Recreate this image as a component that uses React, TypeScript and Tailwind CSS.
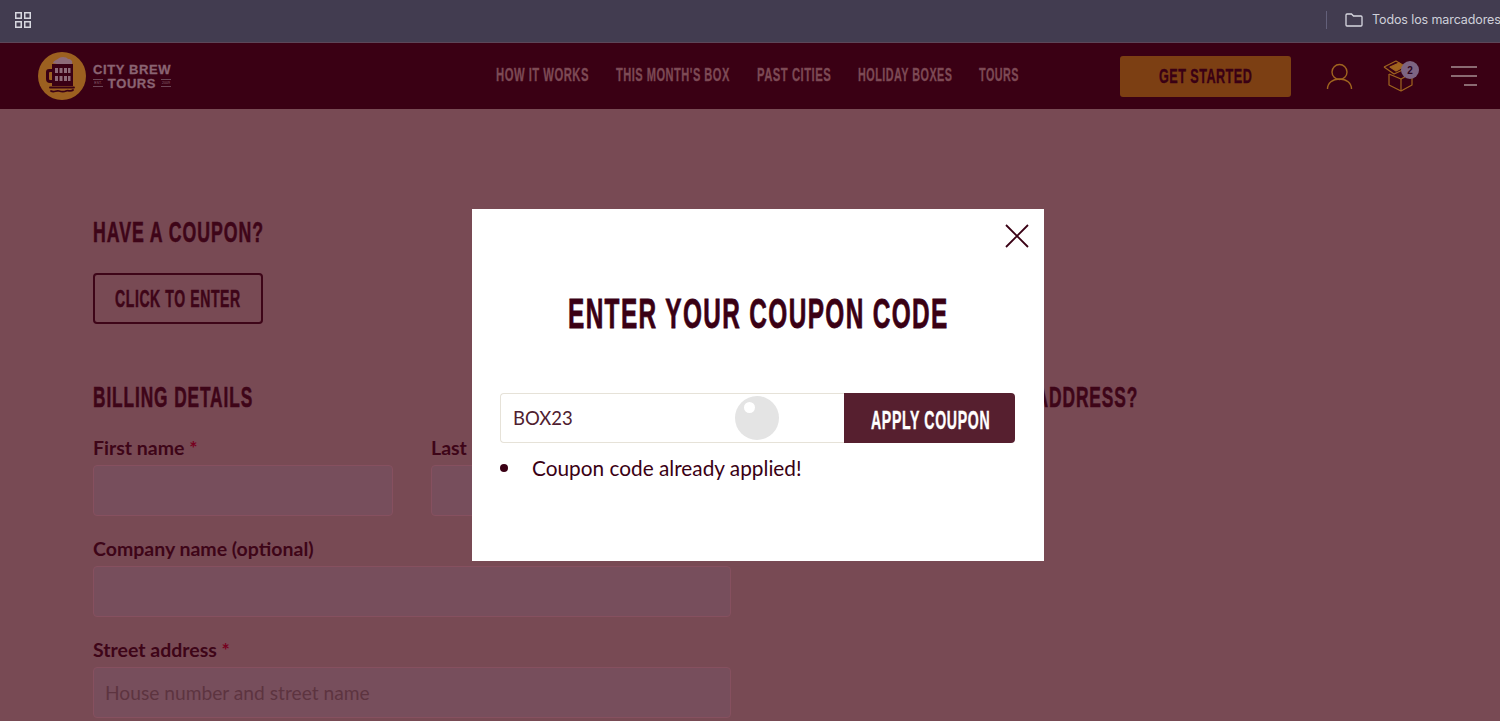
import React from "react";

const head = "font-['Liberation_Sans',sans-serif] font-bold";
const body = "font-['Lato','Noto_Sans',sans-serif]";

function Cond({ w, s, children }: { w: string; s: string; children: React.ReactNode }) {
  return (
    <span className={`block shrink-0 ${w}`}>
      <span className={`block w-max origin-left whitespace-nowrap ${s}`}>{children}</span>
    </span>
  );
}

function Logo() {
  return (
    <svg width="48" height="48" viewBox="0 0 48 48" className="shrink-0">
      <circle cx="24" cy="24" r="24" fill="#9c6020" />
      <path d="M15 11c1-3 4-3 6-5 3-2 8-1 9 1 3 0 5 2 4 5l-1 3-2-1c-5-2-11-1-16-3z" fill="#8d6a78" />
      <path d="M14 12h21v22H14zM14 17H11a3 3 0 0 0-3 3v7a4 4 0 0 0 4 4h2v-3h-2a1 1 0 0 1-1-1v-6a1 1 0 0 1 1-1h2z" fill="#3a0014" />
      <g fill="#8d6a78">
        <rect x="17" y="16" width="3" height="5" /><rect x="21.5" y="16" width="3" height="5" /><rect x="26" y="16" width="3" height="5" /><rect x="30" y="16" width="2.5" height="5" />
        <rect x="17" y="24" width="3" height="5" /><rect x="21.5" y="24" width="3" height="5" /><rect x="26" y="24" width="3" height="5" /><rect x="30" y="24" width="2.5" height="5" />
      </g>
      <path d="M12 35.5h24M13 39c3 2 5-1 8 0s5 1 7 0 5 1 7-1" stroke="#3a0014" strokeWidth="1.8" fill="none" strokeLinecap="round" />
    </svg>
  );
}

function BoxIcon() {
  return (
    <svg width="30" height="32" viewBox="0 0 30 32" fill="none" stroke="#a0641f" strokeWidth="1.2" strokeLinejoin="round">
      <path d="M6 14v11l12 6 11-6V14" />
      <path d="M18 19v12" />
      <path d="M6 14l12 5 11-6" />
      <path d="M1 7l12-6 5 3" />
      <path d="M1 7l10 7 13-6" />
      <path d="M7 7l9-4 6 3-9 5z" fill="#a0641f" />
    </svg>
  );
}

function Field({ label, required, placeholder, className }: { label: string; required?: boolean; placeholder?: string; className: string }) {
  return (
    <div className={`flex flex-col ${className}`}>
      <div className={`${body} text-[19.5px] font-bold leading-[22px] text-[#3e0518] whitespace-nowrap`}>
        {label}
        {required && <span className="text-[#77011f]"> *</span>}
      </div>
      <div className={`${body} mt-[6px] flex h-[51px] items-center rounded-[4px] border border-[#86505f] bg-[#774e5c] px-[11px] pt-[1px] text-[19.2px] text-[#5d3440]`}>
        {placeholder}
      </div>
    </div>
  );
}

export default function App() {
  return (
    <div className="relative flex h-[721px] w-[1500px] flex-col overflow-hidden bg-[#784a54]">
      <div className="flex h-[43px] shrink-0 items-center border-b border-[#5c4658] bg-[#423c50] pb-[2px] pl-[15px]">
        <svg width="16" height="16" viewBox="0 0 16 16" fill="none" stroke="#d8d8e0" strokeWidth="1.5">
          <rect x=".75" y=".75" width="5.5" height="5.5" /><rect x="9.75" y=".75" width="5.5" height="5.5" />
          <rect x=".75" y="9.75" width="5.5" height="5.5" /><rect x="9.75" y="9.75" width="5.5" height="5.5" />
        </svg>
        <div className="ml-auto flex items-center">
          <div className="h-[18px] w-px bg-[#63607a]" />
          <svg className="ml-[18px]" width="18" height="14" viewBox="0 0 18 14" fill="none" stroke="#d8d8e0" strokeWidth="1.3">
            <path d="M1 12V2a1 1 0 0 1 1-1h4.5l2 2H16a1 1 0 0 1 1 1v8a1 1 0 0 1-1 1H2a1 1 0 0 1-1-1z" />
          </svg>
          <span className="ml-[9px] w-[128px] whitespace-nowrap font-['Inter',sans-serif] text-[12.5px] tracking-[-0.1px] text-[#cfd0da]">Todos los marcadores</span>
        </div>
      </div>

      <header className="flex h-[66px] shrink-0 items-center bg-[#3a0014] pl-[38px]">
        <Logo />
        <div className="ml-[7px] flex w-[78px] flex-col font-['Liberation_Sans',sans-serif] font-bold text-[#8a6372] [-webkit-text-stroke:0.3px]">
          <span className="text-[13px] leading-[14px] tracking-[0.6px] whitespace-nowrap">CITY BREW</span>
          <div className="flex items-center justify-between">
            <span className="w-[10px] border-y border-[#6d4656] text-center text-[3.5px] leading-[6px] font-normal [-webkit-text-stroke:0px]">EST.</span>
            <span className="text-[13px] leading-[13px] tracking-[0.6px]">TOURS</span>
            <span className="w-[10px] border-y border-[#6d4656] text-center text-[3.5px] leading-[6px] font-normal [-webkit-text-stroke:0px]">2009</span>
          </div>
        </div>
        <nav className={`${head} ml-[325px] flex gap-[27px] pb-[2px] text-[18px] tracking-[0.8px] text-[#7d4a55] [-webkit-text-stroke:0.3px]`}>
          <Cond w="w-[93px]" s="scale-x-[0.626]">HOW IT WORKS</Cond>
          <Cond w="w-[114px]" s="scale-x-[0.615]">THIS MONTH'S BOX</Cond>
          <Cond w="w-[74px]" s="scale-x-[0.627]">PAST CITIES</Cond>
          <Cond w="w-[94px]" s="scale-x-[0.60]">HOLIDAY BOXES</Cond>
          <Cond w="w-[40px]" s="scale-x-[0.60]">TOURS</Cond>
        </nav>
        <div className="ml-auto flex items-center pr-[23px]">
          <div className={`${head} flex h-[41px] w-[171px] items-center justify-center rounded-[3px] bg-[#7c3f13] text-[21px] tracking-[0.8px] text-[#3a0014] [-webkit-text-stroke:0.4px]`}>
            <Cond w="w-[94px]" s="scale-x-[0.60]">GET STARTED</Cond>
          </div>
          <svg className="ml-[35px]" width="27" height="27" viewBox="0 0 27 27" fill="none" stroke="#a0641f" strokeWidth="1.4">
            <circle cx="13.5" cy="9" r="7.5" />
            <path d="M1.5 26c0-6 5-10 12-10s12 4 12 10" />
          </svg>
          <div className="relative ml-[30px] h-[32px] w-[32px]">
            <BoxIcon />
            <div className="absolute left-[18px] top-[1px] flex h-[18px] w-[18px] items-center justify-center rounded-full bg-[#7d6482] font-['Liberation_Sans',sans-serif] text-[10px] font-bold text-[#2e0520]">2</div>
          </div>
          <div className="ml-[36px] flex w-[26px] flex-col items-end gap-[7px]">
            <div className="h-[2px] w-full bg-[#8a6a72]" />
            <div className="h-[2px] w-full bg-[#8a6a72]" />
            <div className="h-[2px] w-[13px] bg-[#8a6a72]" />
          </div>
        </div>
      </header>

      <main className="flex flex-col pl-[93px] pt-[105px]">
        <h2 className={`${head} text-[30px] leading-[36px] tracking-[1.6px] text-[#3e0518] [-webkit-text-stroke:0.6px]`}>
          <Cond w="w-[169px]" s="scale-x-[0.59]">HAVE A COUPON?</Cond>
        </h2>
        <div className={`${head} mt-[23px] flex h-[51px] w-[170px] items-center justify-center rounded-[4px] border-2 border-[#3e0518] pt-[3px] text-[23.5px] tracking-[1px] text-[#3e0518] [-webkit-text-stroke:0.5px]`}>
          <Cond w="w-[126px]" s="scale-x-[0.597]">CLICK TO ENTER</Cond>
        </div>
        <div className={`${head} mt-[55px] flex text-[30px] leading-[36px] tracking-[1.6px] text-[#3e0518] [-webkit-text-stroke:0.6px]`}>
          <h2 className="w-[733px]"><Cond w="w-[160px]" s="scale-x-[0.575]">BILLING DETAILS</Cond></h2>
          <h2><Cond w="w-[312px]" s="scale-x-[0.578]">SHIP TO A DIFFERENT ADDRESS?</Cond></h2>
        </div>
        <div className="mt-[22px] flex gap-[38px]">
          <Field label="First name" required className="w-[300px]" />
          <Field label="Last name" required className="w-[300px]" />
        </div>
        <Field label="Company name (optional)" className="mt-[22px] w-[638px]" />
        <Field label="Street address" required placeholder="House number and street name" className="mt-[22px] w-[638px]" />
      </main>

      <div className="absolute left-[472px] top-[209px] flex h-[352px] w-[572px] flex-col items-center bg-white">
        <svg className="absolute right-[14px] top-[14px]" width="26" height="26" viewBox="0 0 26 26" stroke="#3a0014" strokeWidth="1.8" fill="none">
          <path d="M2 2l22 22M24 2L2 24" />
        </svg>
        <h1 className={`${head} mt-[79px] text-[42px] leading-[52px] tracking-[2.4px] text-[#3a0014] [-webkit-text-stroke:0.8px]`}>
          <Cond w="w-[381px]" s="scale-x-[0.58]">ENTER YOUR COUPON CODE</Cond>
        </h1>
        <div className="relative ml-[28px] mt-[53px] flex h-[50px] w-[515px] self-start">
          <div className={`${body} flex w-[344px] items-center rounded-l-[4px] border border-r-0 border-[#e6e2d8] pl-[12px] pt-[1px] text-[18.5px] text-[#4f2030]`}>BOX23</div>
          <div className={`${head} flex flex-1 items-center justify-center rounded-r-[4px] bg-[#561f2f] pt-[4px] text-[26px] tracking-[1.2px] text-white [-webkit-text-stroke:0.4px]`}>
            <Cond w="w-[118px]" s="scale-x-[0.543]">APPLY COUPON</Cond>
          </div>
          <div className="absolute left-[235px] top-[3px] h-[44px] w-[44px] rounded-full bg-[#e4e4e4]">
            <div className="absolute left-[9px] top-[6px] h-[11px] w-[11px] rounded-full bg-white" />
          </div>
        </div>
        <div className={`${body} ml-[28px] mt-[12px] flex items-center self-start text-[20.8px] leading-[26px] text-[#3a0014]`}>
          <span className="h-[8px] w-[8px] rounded-full bg-[#3a0014]" />
          <span className="ml-[24px]">Coupon code already applied!</span>
        </div>
      </div>
    </div>
  );
}
